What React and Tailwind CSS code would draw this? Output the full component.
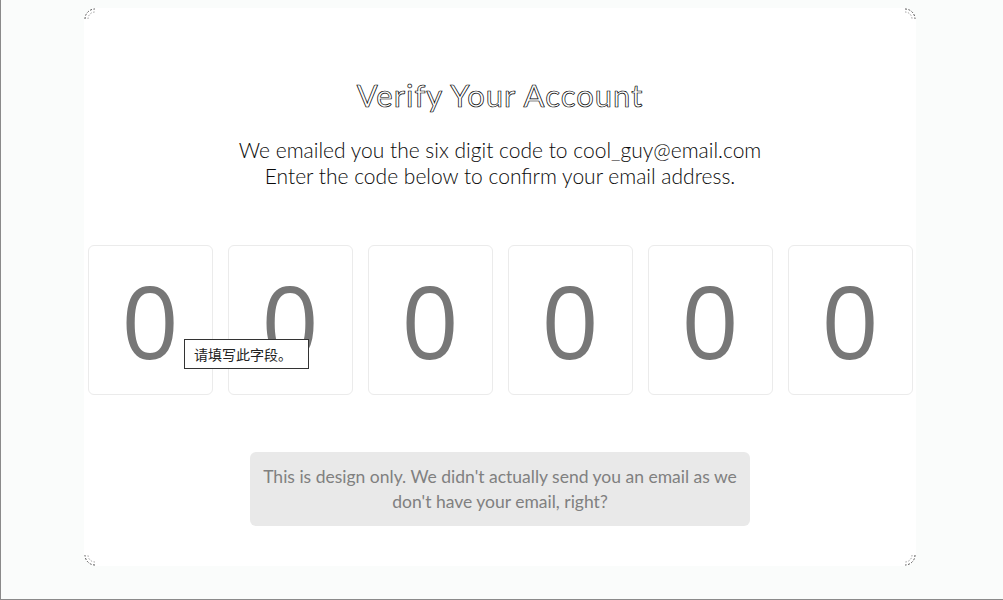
import React from "react";

const digits = ["0", "0", "0", "0", "0", "0"];

function Corner({ className, rotate }) {
  return (
    <svg
      width="12"
      height="12"
      viewBox="0 0 12 12"
      className={`absolute ${className}`}
      style={{ transform: `rotate(${rotate}deg)` }}
    >
      <path d="M1 11 A10 10 0 0 1 11 1" fill="none" stroke="#555" strokeWidth="1" strokeDasharray="2 1.5" />
      <path d="M4 11 A7 7 0 0 1 11 4" fill="none" stroke="#888" strokeWidth="0.8" strokeDasharray="1.5 1.5" />
    </svg>
  );
}

export default function App() {
  return (
    <div className="relative w-[1003px] h-[600px] overflow-hidden bg-[#fafcfb] border-l border-b border-[#8a8a8a]">
      <div className="relative ml-[83px] mt-2 w-[832px] h-[558px] rounded-xl bg-white flex flex-col items-center pt-[69px]">
        <Corner className="left-0 top-0" rotate={0} />
        <Corner className="right-0 top-0" rotate={90} />
        <Corner className="right-0 bottom-0" rotate={180} />
        <Corner className="left-0 bottom-0" rotate={270} />

        <h1
          className="text-[31px] leading-[36px] text-white tracking-[1px] [-webkit-text-stroke:0.7px_#000]"
          style={{ fontFamily: "Lato, 'Noto Sans', sans-serif", fontWeight: 400 }}
        >
          Verify Your Account
        </h1>

        <p
          className="mt-6 text-center text-[21px] leading-[26px] text-[#0a0a0a]"
          style={{ fontFamily: "Lato, 'Noto Sans', sans-serif", fontWeight: 300 }}
        >
          We emailed you the six digit code to cool_guy@email.com
          <br />
          Enter the code below to confirm your email address.
        </p>

        <div className="mt-14 flex gap-[15px]">
          {digits.map((d, i) => (
            <div
              key={i}
              className="w-[125px] h-[150px] rounded-md border border-[#ebebeb] bg-white flex items-center justify-center text-[100px] leading-none text-[#777777]"
              style={{ fontFamily: "'Open Sans', 'Noto Sans', sans-serif" }}
            >
              {d}
            </div>
          ))}
        </div>

        <div
          className="mt-[57px] w-[500px] rounded-md bg-[#e9e9e9] py-3 px-3 text-center text-[17.5px] leading-[25px] text-[#808080]"
          style={{ fontFamily: "Lato, 'Noto Sans', sans-serif" }}
        >
          This is design only. We didn't actually send you an email as we don't have your email, right?
        </div>
      </div>

      <div
        className="absolute left-[183px] top-[339px] w-[125px] h-[30px] border border-[#333] bg-white flex items-center px-[9px] text-[14px] text-[#222]"
        style={{ fontFamily: "'Noto Sans CJK SC', 'Noto Sans', sans-serif" }}
      >
        请填写此字段。
      </div>
    </div>
  );
}
